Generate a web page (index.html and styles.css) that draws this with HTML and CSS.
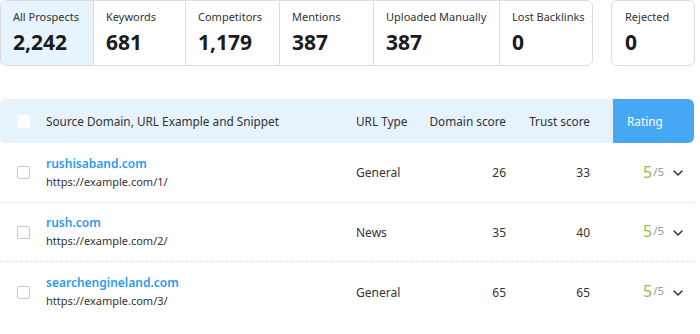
FILE: index.html
```html
<!DOCTYPE html>
<html>
<head>
<meta charset="utf-8">
<link rel="stylesheet" href="styles.css">
</head>
<body>
<div class="page">
  <div class="stats">
    <div class="group">
      <div class="stat active"><div class="label">All Prospects</div><div class="num">2,242</div></div>
      <div class="stat w92"><div class="label">Keywords</div><div class="num">681</div></div>
      <div class="stat w94"><div class="label">Competitors</div><div class="num">1,179</div></div>
      <div class="stat w94"><div class="label">Mentions</div><div class="num">387</div></div>
      <div class="stat w126"><div class="label">Uploaded Manually</div><div class="num">387</div></div>
      <div class="stat last"><div class="label">Lost Backlinks</div><div class="num">0</div></div>
    </div>
    <div class="card"><div class="label">Rejected</div><div class="num">0</div></div>
  </div>

  <div class="table">
    <div class="thead">
      <div class="cell chk"><span class="box white"></span></div>
      <div class="cell">Source Domain, URL Example and Snippet</div>
      <div class="cell">URL Type</div>
      <div class="cell right">Domain score</div>
      <div class="cell right">Trust score</div>
      <div class="cell"></div>
      <div class="cell rating-h">Rating</div>
    </div>

    <div class="row">
      <div class="cell chk"><span class="box"></span></div>
      <div class="cell src"><a class="dom">rushisaband.com</a><span class="url">https://example.com/1/</span></div>
      <div class="cell">General</div>
      <div class="cell right">26</div>
      <div class="cell right">33</div>
      <div class="cell"></div>
      <div class="cell rate"><span class="score">5</span><span class="of">/5</span><svg class="chev" width="12" height="8" viewBox="0 0 12 8"><path d="M2 2l4 4 4-4" fill="none" stroke="#333" stroke-width="1.5" stroke-linecap="round" stroke-linejoin="round"/></svg></div>
    </div>

    <div class="row dotted">
      <div class="cell chk"><span class="box"></span></div>
      <div class="cell src"><a class="dom">rush.com</a><span class="url">https://example.com/2/</span></div>
      <div class="cell">News</div>
      <div class="cell right">35</div>
      <div class="cell right">40</div>
      <div class="cell"></div>
      <div class="cell rate"><span class="score">5</span><span class="of">/5</span><svg class="chev" width="12" height="8" viewBox="0 0 12 8"><path d="M2 2l4 4 4-4" fill="none" stroke="#333" stroke-width="1.5" stroke-linecap="round" stroke-linejoin="round"/></svg></div>
    </div>

    <div class="row noline">
      <div class="cell chk"><span class="box"></span></div>
      <div class="cell src"><a class="dom">searchengineland.com</a><span class="url">https://example.com/3/</span></div>
      <div class="cell">General</div>
      <div class="cell right">65</div>
      <div class="cell right">65</div>
      <div class="cell"></div>
      <div class="cell rate"><span class="score">5</span><span class="of">/5</span><svg class="chev" width="12" height="8" viewBox="0 0 12 8"><path d="M2 2l4 4 4-4" fill="none" stroke="#333" stroke-width="1.5" stroke-linecap="round" stroke-linejoin="round"/></svg></div>
    </div>
  </div>
</div>
</body>
</html>
```

FILE: styles.css
```css
* { box-sizing: border-box; }
html, body { margin: 0; padding: 0; background: #fff; }
body { font-family: "Noto Sans", "Open Sans", sans-serif; color: #333; }
.page { width: 700px; height: 334px; overflow: hidden; }

.stats { display: flex; gap: 18px; height: 66px; }
.group {
  display: flex; width: 593px; height: 66px;
  border: 1px solid #dcdde0; border-radius: 6px; overflow: hidden;
}
.stat { width: 93px; border-right: 1px solid #dcdde0; padding: 8px 0 0 12px; }
.stat.active { background: #e7f3fd; border: 1px dotted #b8cfe6; border-radius: 6px 0 0 6px; margin: -1px 0 -1px -1px; height: 66px; width: 94px; }
.stat.w92 { width: 92px; }
.stat.w94 { width: 94px; }
.stat.w126 { width: 126px; }
.stat.last { flex: 1; border-right: none; }
.card { width: 84px; height: 66px; border: 1px solid #dcdde0; border-radius: 6px; padding: 8px 0 0 13px; }
.label { font-size: 11px; line-height: 16px; color: #333; }
.num { font-size: 21px; font-weight: 700; line-height: 28px; color: #1b1c20; margin-top: 3px; }

.table { margin-top: 33px; width: 694px; }
.thead, .row {
  display: grid;
  grid-template-columns: 46px 310px 70px 82px 84px 21px 81px;
  align-items: center;
}
.thead { height: 44px; background: #e6f2fc; border-radius: 6px; font-size: 11.8px; color: #333; }
.rating-h { background: #46a8f5; color: #fff; height: 44px; display: flex; align-items: center; padding-left: 14px; border-radius: 0 6px 6px 0; }
.cell.right { text-align: right; padding-right: 2px; }
.chk { padding-left: 17px; display: flex; align-items: center; }
.box { width: 13px; height: 13px; border: 1px solid #c8c9cc; border-radius: 2px; background: #fff; display: block; }
.box.white { border-color: #fff; }

.row { height: 60px; border-bottom: 1px solid #ececf3; font-size: 12px; color: #333; }
.row.dotted { height: 59px; border-bottom: 1px dashed #e2e3e8; }
.row.noline { border-bottom: none; }
.src { display: flex; flex-direction: column; }
.dom { color: #2b9bf3; font-weight: 600; font-size: 12px; line-height: 18px; }
.url { font-size: 11px; line-height: 18px; color: #333; }
.rate { display: flex; align-items: center; padding-left: 30px; margin-top: -2px; }
.score { color: #8cc152; font-size: 16px; line-height: 18px; }
.of { color: #999; font-size: 11.5px; line-height: 18px; margin-left: 1px; }
.chev { margin-left: 8px; margin-top: 3px; }
```
